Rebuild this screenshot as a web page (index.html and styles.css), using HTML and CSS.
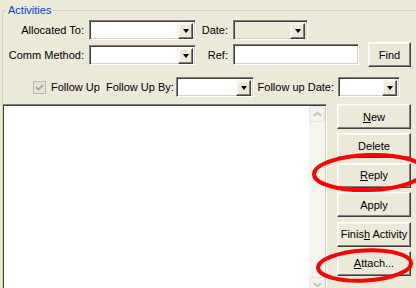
FILE: index.html
```
<!DOCTYPE html>
<html lang="en">
<head>
    <meta charset="UTF-8">
    <title>Activities</title>
    <link rel="stylesheet" href="styles.css">
</head>
<body>
    <fieldset class="group">
        <legend class="group-title">Activities</legend>

        <div class="row row-alloc">
            <label class="lbl lbl-main">Allocated To:</label>
            <div class="combo combo-main"><span class="drop"><i class="arrow"></i></span></div>
            <label class="lbl lbl-side">Date:</label>
            <div class="combo combo-date disabled"><span class="drop"><i class="arrow"></i></span></div>
        </div>

        <div class="row row-comm">
            <label class="lbl lbl-main">Comm Method:</label>
            <div class="combo combo-main"><span class="drop"><i class="arrow"></i></span></div>
            <label class="lbl lbl-side">Ref:</label>
            <div class="field field-ref"></div>
            <button class="button find">Find</button>
        </div>

        <div class="row row-follow">
            <span class="check">
                <svg width="13" height="13" viewBox="0 0 13 13">
                    <rect x="0.5" y="0.5" width="12" height="12" fill="#e6e4da" stroke="#bab7a8"/>
                    <path d="M3 6 L5.5 8.5 L10 4" fill="none" stroke="#aba89a" stroke-width="1.8"/>
                </svg>
            </span>
            <span class="check-label">Follow Up</span>
            <label class="lbl lbl-by">Follow Up By:</label>
            <div class="combo combo-by"><span class="drop"><i class="arrow"></i></span></div>
            <label class="lbl lbl-fdate">Follow up Date:</label>
            <div class="combo combo-fdate"><span class="drop"><i class="arrow"></i></span></div>
        </div>

        <div class="body">
            <div class="list">
                <div class="scrollbar">
                    <span class="sb-button">
                        <svg width="9" height="6" viewBox="0 0 9 6"><path d="M1 5 L4.5 1.5 L8 5" fill="none" stroke="#c9c6b8" stroke-width="2"/></svg>
                    </span>
                    <span class="sb-button">
                        <svg width="9" height="6" viewBox="0 0 9 6"><path d="M1 1 L4.5 4.5 L8 1" fill="none" stroke="#c9c6b8" stroke-width="2"/></svg>
                    </span>
                </div>
            </div>
            <div class="actions">
                <button class="button action"><u>N</u>ew</button>
                <button class="button action">Delete</button>
                <button class="button action"><u>R</u>eply</button>
                <button class="button action">Apply</button>
                <button class="button action">Finis<u>h</u> Activity</button>
                <button class="button action"><u>A</u>ttach...</button>
            </div>
        </div>
    </fieldset>

    <!-- red marks drawn over the screenshot -->
    <svg class="marks" width="416" height="288" viewBox="0 0 416 288">
        <ellipse cx="369" cy="172.5" rx="55" ry="17.5" transform="rotate(-2 369 172.5)"/>
        <ellipse cx="364.5" cy="265.5" rx="46.5" ry="15" transform="rotate(-3 364.5 265.5)"/>
    </svg>
</body>
</html>
```

FILE: styles.css
```
*{
   margin: 0;
   padding: 0;
   box-sizing: border-box;
}

body{
   width: 416px;
   height: 288px;
   overflow: hidden;
   position: relative;
   background-color: #ece9d8;
   font-family: "Liberation Sans", Arial, sans-serif;
   font-size: 11px;
   color: #000;
}

.group{
   margin: 4px 0 0 2px;
   width: 414px;
   height: 284px;
   overflow: hidden;
   min-width: 0;
   border: 1px solid #d0d0bf;
   border-right: none;
   border-bottom: none;
   border-radius: 3px 0 0 0;
}

.group-title{
   margin-left: 3px;
   padding: 0 2px;
   line-height: 13px;
   color: #0046d5;
}

.row{
   display: flex;
   align-items: center;
   height: 20px;
   white-space: nowrap;
}

.row-alloc{
   margin-top: 3px;
}

.row-comm{
   margin-top: 2px;
   height: 25px;
}

.row-follow{
   margin-top: 10px;
}

.lbl{
   display: inline-block;
   text-align: right;
   margin-right: 5px;
}

.lbl-main{
   width: 81px;
}

.lbl-side{
   width: 32px;
}

.lbl-by{
   width: 66px;
   margin-right: 4px;
}

.lbl-fdate{
   width: 80px;
   margin-right: 4px;
}

.combo,
.field{
   height: 20px;
   background-color: #fff;
   border: 1px solid;
   border-color: #808080 #fff #fff #808080;
   box-shadow: inset 1px 1px #404040, inset -1px -1px #d4d0c8;
   display: flex;
   justify-content: flex-end;
   padding: 2px;
}

.combo.disabled{
   background-color: #ece9d8;
}

.combo-main{
   width: 107px;
}

.combo-date{
   width: 75px;
}

.combo-by{
   width: 78px;
}

.combo-fdate{
   width: 62px;
}

.field-ref{
   width: 126px;
   height: 21px;
}

.drop{
   width: 15px;
   height: 16px;
   background-color: #ece9d8;
   border: 1px solid;
   border-color: #f4f3ee #404040 #404040 #f4f3ee;
   box-shadow: inset -1px -1px #808080, inset 1px 1px #fff;
   display: flex;
   align-items: center;
   justify-content: center;
}

.arrow{
   width: 0;
   height: 0;
   border-top: 4px solid #000;
   border-left: 3.5px solid transparent;
   border-right: 3.5px solid transparent;
}

.button{
   font-family: inherit;
   font-size: 11px;
   color: #000;
   background-color: #ece9d8;
   border: 1px solid;
   border-color: #fff #404040 #404040 #fff;
   box-shadow: inset -1px -1px #808080, inset 1px 1px #f7f6f1;
   cursor: pointer;
}

.find{
   width: 43px;
   height: 25px;
   margin-left: 9px;
}

.check{
   width: 13px;
   height: 13px;
   margin-left: 30px;
   display: flex;
}

.check-label{
   width: 55px;
   margin-left: 5px;
}

.body{
   display: flex;
   align-items: flex-start;
   margin-top: 7px;
}

.list{
   flex-shrink: 0;
   width: 325px;
   height: 191px;
   margin-left: -1px;
   background-color: #fff;
   border: 1px solid;
   border-color: #808080 #fff #fff #808080;
   box-shadow: inset 1px 1px #404040, inset -1px -1px #d4d0c8;
   padding: 1px;
   display: flex;
   justify-content: flex-end;
}

.scrollbar{
   width: 16px;
   height: 100%;
   background-color: #f5f4ed;
   display: flex;
   flex-direction: column;
   justify-content: space-between;
}

.sb-button{
   width: 16px;
   height: 16px;
   background-color: #f3f2ec;
   border: 1px solid #e6e4db;
   border-radius: 2px;
   display: flex;
   align-items: center;
   justify-content: center;
}

.actions{
   display: flex;
   flex-direction: column;
   gap: 4.4px;
   margin-left: 10px;
}

.action{
   width: 74px;
   height: 25px;
}

.marks{
   position: absolute;
   left: 0;
   top: 0;
   pointer-events: none;
}

.marks ellipse{
   fill: none;
   stroke: #f00;
   stroke-width: 4;
}
```
